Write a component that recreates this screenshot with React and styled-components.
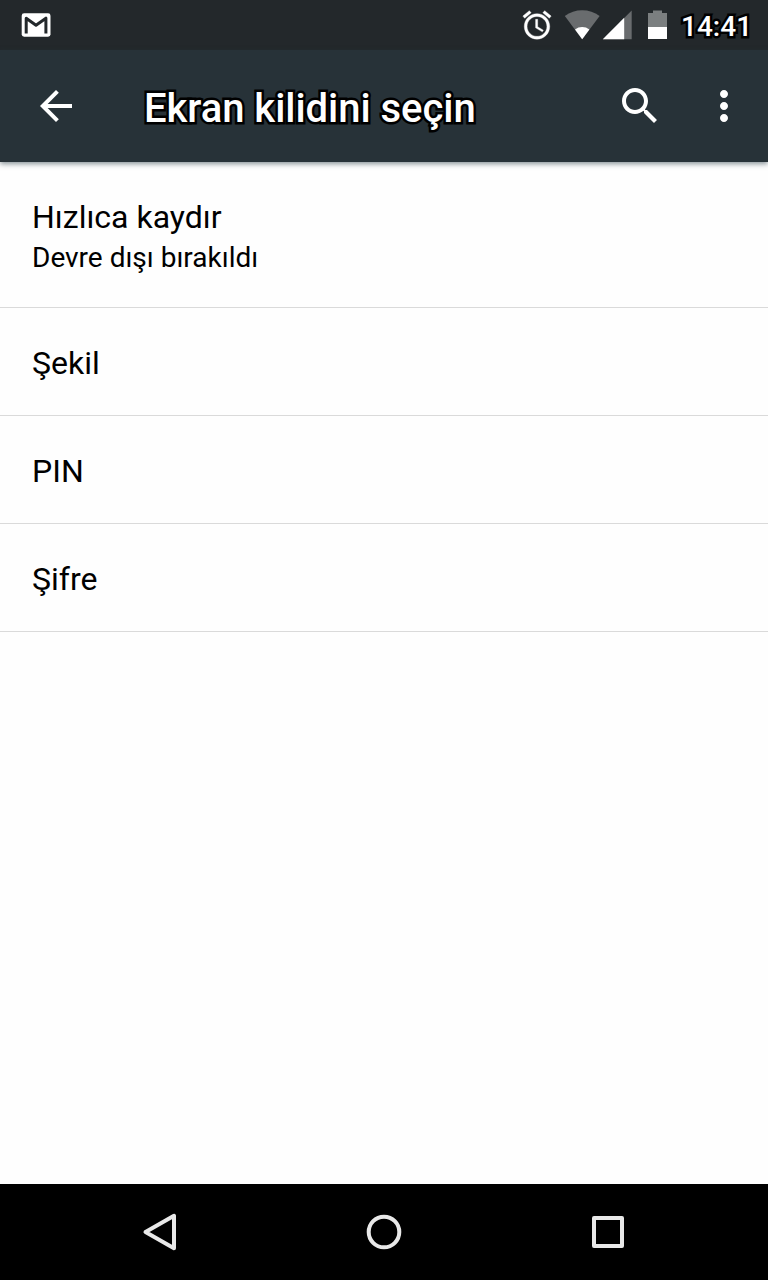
import React from 'react';
import styled, { createGlobalStyle } from 'styled-components';

const GlobalStyle = createGlobalStyle`
  * { box-sizing: border-box; }
  body { margin: 0; background: #fefefe; font-family: Roboto, "Noto Sans", sans-serif; }
  svg { display: block; flex: none; }
`;

const Screen = styled.div`
  width: 768px;
  height: 1280px;
  display: flex;
  flex-direction: column;
  background: #fefefe;
  overflow: hidden;
`;

const StatusBar = styled.header`
  height: 50px;
  flex: none;
  display: flex;
  align-items: center;
  justify-content: space-between;
  padding: 0 17px 0 20px;
  background: #23282b;
`;

const StatusIcons = styled.div`
  display: flex;
  align-items: center;
`;

const Clock = styled.time`
  width: 70px;
  margin-top: 3px;
  font-size: 28px;
  line-height: 34px;
  font-weight: 500;
  color: #fff;
  white-space: nowrap;
  -webkit-text-stroke: 5px #000;
  paint-order: stroke fill;
`;

const AppBar = styled.nav`
  height: 112px;
  flex: none;
  display: flex;
  align-items: center;
  padding: 0 20px 0 32px;
  background: #273238;
  box-shadow: 0 2px 5px rgba(40, 60, 70, 0.55);
`;

const Title = styled.h1`
  flex: 1;
  margin: 6px 0 0 64px;
  font-size: 40px;
  line-height: 48px;
  font-weight: 500;
  letter-spacing: -0.05px;
  color: #fff;
  white-space: nowrap;
  -webkit-text-stroke: 5px #000;
  paint-order: stroke fill;
`;

const IconButton = styled.button`
  width: 48px;
  height: 48px;
  margin: 0 0 0 ${(p) => p.$gap || 0}px;
  padding: 0;
  border: 0;
  background: none;
  color: #fff;
`;

const List = styled.ul`
  flex: 1;
  margin: 0;
  padding: 0;
  list-style: none;
`;

const Row = styled.li`
  height: ${(p) => (p.$tall ? 146 : 108)}px;
  display: flex;
  flex-direction: column;
  justify-content: center;
  padding: 2px 32px 0;
  border-bottom: 1px solid #dadada;
`;

const RowTitle = styled.span`
  font-size: 32px;
  line-height: 42px;
  color: #000;
`;

const RowSummary = styled.span`
  font-size: 28px;
  line-height: 38px;
  padding-top: 1px;
  margin-bottom: -1px;
  color: #000;
`;

const NavBar = styled.footer`
  height: 96px;
  flex: none;
  display: flex;
  align-items: center;
  justify-content: center;
  gap: 176px;
  background: #000;
`;

const Glyph = ({ d, size = 48 }) => (
  <svg width={size} height={size} viewBox="0 0 24 24" fill="currentColor">
    <path d={d} />
  </svg>
);

const icons = {
  back: 'M20 11H7.83l5.59-5.59L12 4l-8 8 8 8 1.41-1.41L7.83 13H20v-2z',
  search:
    'M15.5 14h-.79l-.28-.27C15.41 12.59 16 11.11 16 9.5 16 5.91 13.09 3 9.5 3S3 5.91 3 9.5 5.91 16 9.5 16c1.61 0 3.09-.59 4.23-1.57l.27.28v.79l5 4.99L20.49 19l-4.99-5zm-6 0C7.01 14 5 11.99 5 9.5S7.01 5 9.5 5 14 7.01 14 9.5 11.99 14 9.5 14z',
  more: 'M12 8c1.1 0 2-.9 2-2s-.9-2-2-2-2 .9-2 2 .9 2 2 2zm0 2c-1.1 0-2 .9-2 2s.9 2 2 2 2-.9 2-2-.9-2-2-2zm0 6c-1.1 0-2 .9-2 2s.9 2 2 2 2-.9 2-2-.9-2-2-2z',
};

const MailIcon = () => (
  <svg width="32" height="34" viewBox="0 0 32 34">
    <rect x="1.7" y="5.3" width="28.8" height="23.4" rx="2.4" fill="#fff" />
    <path d="M6.2 25.4V10.2L16 17.2l9.9-7v15.2" fill="none" stroke="#23282b" strokeWidth="3" strokeLinejoin="round" />
  </svg>
);

const AlarmIcon = () => (
  <svg width="34" height="34" viewBox="0 0 24 24" fill="#fff" stroke="#fff" strokeWidth="0.25">
    <path d="M22 5.72l-4.6-3.86-1.29 1.53 4.6 3.86L22 5.72zM7.88 3.39L6.6 1.86 2 5.71l1.29 1.53 4.59-3.85zM12.5 8H11v6l4.75 2.85.75-1.23-4-2.37V8zM12 4c-4.97 0-9 4.03-9 9s4.02 9 9 9c4.97 0 9-4.03 9-9s-4.03-9-9-9zm0 16c-3.87 0-7-3.13-7-7s3.13-7 7-7 7 3.13 7 7-3.13 7-7 7z" />
  </svg>
);

const WifiIcon = () => (
  <svg width="48" height="34" viewBox="0 0 48 34">
    <path d="M28.2 31.2L10.8 8A29 29 0 0 1 45.6 8Z" fill="#696c6e" />
    <path d="M28.2 31.2L21 21.4A12.2 12.2 0 0 1 35.4 21.4Z" fill="#fff" />
  </svg>
);

const SignalIcon = () => (
  <svg width="36" height="34" viewBox="0 0 36 34">
    <path d="M0.8 31.2L29.7 2.4V31.2Z" fill="#696c6e" />
    <path d="M0.8 31.2L22.2 9.8V31.2Z" fill="#fff" />
  </svg>
);

const BatteryIcon = () => (
  <svg width="43" height="34" viewBox="0 0 43 34">
    <path d="M15 2.5H24V5H29V19H10V5H15Z" fill="#7b7f80" />
    <path d="M10 19H29V31H10Z" fill="#fff" />
  </svg>
);

const options = [
  { title: 'Hızlıca kaydır', summary: 'Devre dışı bırakıldı' },
  { title: 'Şekil' },
  { title: 'PIN' },
  { title: 'Şifre' },
];

export default function App() {
  return (
    <Screen>
      <GlobalStyle />
      <StatusBar>
        <MailIcon />
        <StatusIcons>
          <AlarmIcon />
          <WifiIcon />
          <SignalIcon />
          <BatteryIcon />
          <Clock>14:41</Clock>
        </StatusIcons>
      </StatusBar>
      <AppBar>
        <IconButton aria-label="Geri"><Glyph d={icons.back} /></IconButton>
        <Title>Ekran kilidini seçin</Title>
        <IconButton aria-label="Ara"><Glyph d={icons.search} /></IconButton>
        <IconButton aria-label="Diğer" $gap={36}><Glyph d={icons.more} /></IconButton>
      </AppBar>
      <List>
        {options.map((o) => (
          <Row key={o.title} $tall={!!o.summary}>
            <RowTitle>{o.title}</RowTitle>
            {o.summary && <RowSummary>{o.summary}</RowSummary>}
          </Row>
        ))}
      </List>
      <NavBar>
        <svg width="48" height="48" viewBox="0 0 48 48" fill="none" stroke="#e9e9e9" strokeWidth="4" strokeLinejoin="round">
          <path d="M9.5 24L38 7.8V40.2Z" />
        </svg>
        <svg width="48" height="48" viewBox="0 0 48 48" fill="none" stroke="#e9e9e9" strokeWidth="4">
          <circle cx="24" cy="24" r="15.3" />
        </svg>
        <svg width="48" height="48" viewBox="0 0 48 48" fill="none" stroke="#e9e9e9" strokeWidth="4" strokeLinejoin="round">
          <rect x="10" y="10" width="28" height="28" />
        </svg>
      </NavBar>
    </Screen>
  );
}
